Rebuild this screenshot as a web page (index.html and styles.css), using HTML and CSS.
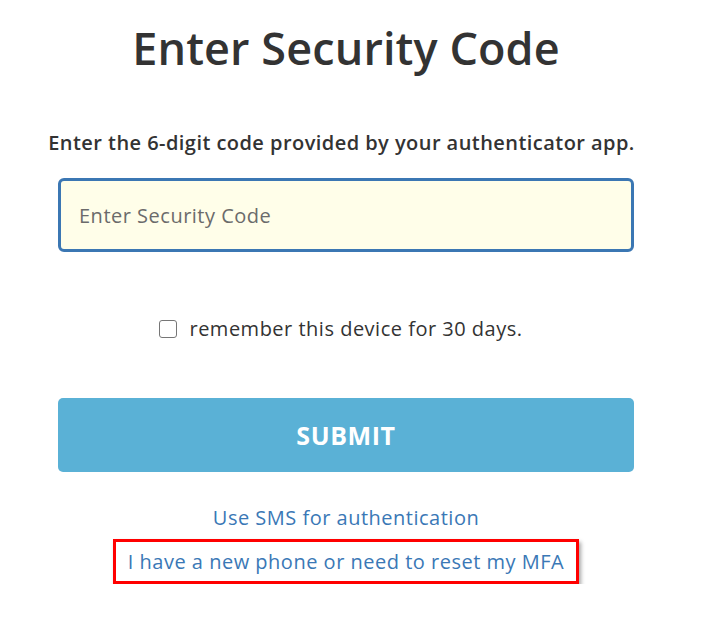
FILE: index.html
```html
<!DOCTYPE html>
<html>
<head>
<meta charset="utf-8">
<link rel="stylesheet" href="styles.css">
</head>
<body>
<div class="wrap">
  <h1 class="title">Enter Security Code</h1>
  <p class="lead">Enter the 6-digit code provided by your authenticator app.</p>
  <input class="code" type="text" placeholder="Enter Security Code">
  <label class="remember"><span class="box"></span>remember this device for 30 days.</label>
  <button class="submit">SUBMIT</button>
  <a class="link sms" href="#">Use SMS for authentication</a>
  <div class="reset"><a class="link" href="#">I have a new phone or need to reset my MFA</a></div>
</div>
</body>
</html>
```
FILE: styles.css
```css
html, body { margin: 0; padding: 0; background: #fff; }
body { font-family: "Open Sans", "Liberation Sans", sans-serif; color: #333; }
.wrap {
  width: 576px;
  margin-left: 58px;
  display: flex;
  flex-direction: column;
  align-items: center;
}
.title {
  margin: 22px 0 0;
  font-size: 45px;
  font-weight: 600;
  line-height: 52px;
  letter-spacing: 0.1px;
  color: #333;
}
.lead {
  margin: 56px 9px 0 0;
  font-size: 20px;
  font-weight: 600;
  line-height: 26px;
  letter-spacing: 0.45px;
  white-space: nowrap;
}
.code {
  box-sizing: border-box;
  margin-top: 22px;
  width: 576px;
  height: 74px;
  border: 3px solid #3b77b3;
  border-radius: 6px;
  background: #fffee9;
  padding: 0 18px;
  font-family: inherit;
  font-size: 20px;
  letter-spacing: 0.5px;
  color: #333;
  outline: none;
}
.code::placeholder { color: #6b6b6b; }
.remember {
  margin: 64px 10px 0 0;
  display: flex;
  align-items: center;
  font-size: 20px;
  line-height: 26px;
  letter-spacing: 0.5px;
  color: #333;
}
.box {
  box-sizing: border-box;
  width: 18px;
  height: 18px;
  border: 1.5px solid #767676;
  border-radius: 3px;
  margin-right: 12px;
  background: #fff;
}
.submit {
  margin-top: 56px;
  width: 576px;
  height: 74px;
  border: none;
  border-radius: 5px;
  background: #5ab1d6;
  color: #fff;
  font-family: inherit;
  font-size: 25px;
  font-weight: 700;
  letter-spacing: 0.6px;
}
.link {
  color: #3a78b6;
  font-size: 20px;
  line-height: 26px;
  letter-spacing: 0.5px;
  text-decoration: none;
}
.sms { margin-top: 33px; }
.reset {
  margin-top: 8px;
  border: 3px solid #f00;
  padding: 7px 12px 6px;
  box-shadow: 2px 3px 4px rgba(0,0,0,0.35);
}
```
